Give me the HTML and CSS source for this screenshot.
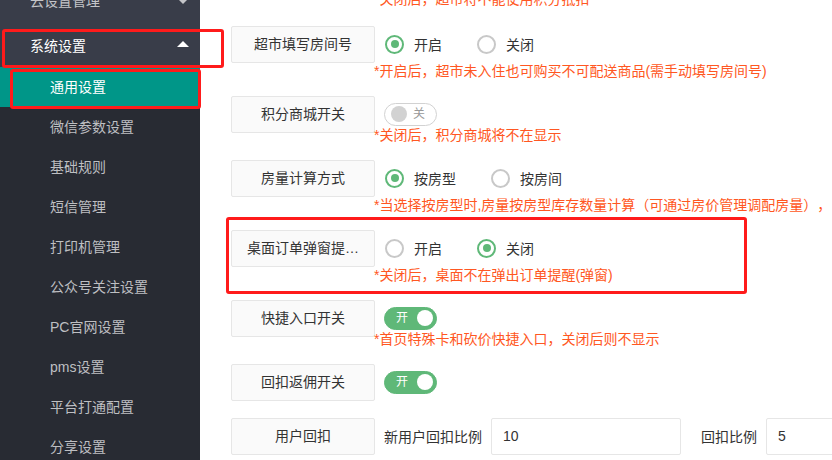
FILE: index.html
```html
<!DOCTYPE html>
<html lang="zh-CN">
<head>
<meta charset="utf-8">
<title>通用设置</title>
<link rel="stylesheet" href="styles.css">
</head>
<body>
<div class="app">
  <aside class="side">
    <div class="nav-parent dim"><span>云设置管理</span><i class="caret down"></i></div>
    <div class="nav-parent open"><span>系统设置</span><i class="caret up"></i></div>
    <ul class="nav-child">
      <li class="active">通用设置</li>
      <li>微信参数设置</li>
      <li>基础规则</li>
      <li>短信管理</li>
      <li>打印机管理</li>
      <li>公众号关注设置</li>
      <li>PC官网设置</li>
      <li>pms设置</li>
      <li>平台打通配置</li>
      <li>分享设置</li>
    </ul>
  </aside>

  <main class="main">
    <div class="hint hint-top">*关闭后，超市将不能使用积分抵扣</div>

    <div class="form-item">
      <div class="row">
        <div class="form-label">超市填写房间号</div>
        <div class="radios">
          <span class="radio checked"><i></i>开启</span>
          <span class="radio"><i></i>关闭</span>
        </div>
      </div>
      <div class="hint">*开启后，超市未入住也可购买不可配送商品(需手动填写房间号)</div>
    </div>

    <div class="form-item">
      <div class="row">
        <div class="form-label">积分商城开关</div>
        <span class="switch off"><i></i><em>关</em></span>
      </div>
      <div class="hint hint-sw">*关闭后，积分商城将不在显示</div>
    </div>

    <div class="form-item">
      <div class="row">
        <div class="form-label">房量计算方式</div>
        <div class="radios">
          <span class="radio checked"><i></i>按房型</span>
          <span class="radio"><i></i>按房间</span>
        </div>
      </div>
      <div class="hint">*当选择按房型时,房量按房型库存数量计算（可通过房价管理调配房量），</div>
    </div>

    <div class="form-item">
      <div class="row">
        <div class="form-label">桌面订单弹窗提醒开关</div>
        <div class="radios">
          <span class="radio"><i></i>开启</span>
          <span class="radio checked"><i></i>关闭</span>
        </div>
      </div>
      <div class="hint">*关闭后，桌面不在弹出订单提醒(弹窗)</div>
    </div>

    <div class="form-item">
      <div class="row">
        <div class="form-label">快捷入口开关</div>
        <span class="switch on"><em>开</em><i></i></span>
      </div>
      <div class="hint hint-sw">*首页特殊卡和砍价快捷入口，关闭后则不显示</div>
    </div>

    <div class="form-item">
      <div class="row">
        <div class="form-label">回扣返佣开关</div>
        <span class="switch on"><em>开</em><i></i></span>
      </div>
    </div>

    <div class="form-item">
      <div class="row">
        <div class="form-label">用户回扣</div>
        <span class="inline-text first">新用户回扣比例</span>
        <div class="input">10</div>
        <span class="inline-text">回扣比例</span>
        <div class="input">5</div>
      </div>
    </div>
  </main>

  <div class="mark mark-parent"></div>
  <div class="mark mark-child"></div>
  <div class="mark mark-row"></div>
</div>
</body>
</html>
```

FILE: styles.css
```css
* { box-sizing: border-box; }

html, body {
  margin: 0;
  padding: 0;
  width: 832px;
  height: 460px;
  overflow: hidden;
  background: #fff;
  font-family: "Liberation Sans", "Noto Sans CJK SC", sans-serif;
  font-size: 14px;
  color: #333;
  text-spacing-trim: space-all;
}

.app {
  position: relative;
  display: flex;
  width: 832px;
  height: 460px;
  overflow: hidden;
}

/* ---------- sidebar ---------- */
.side {
  width: 200px;
  flex: none;
  height: 460px;
  background: #282b33;
  overflow: hidden;
}

.nav-parent {
  height: 45px;
  background: #393d49;
  display: flex;
  align-items: center;
  justify-content: space-between;
  padding: 0 11px 0 30px;
  color: #fff;
}
.nav-parent.dim { margin-top: -23px; color: #c4c5c8; }

.caret {
  width: 0;
  height: 0;
  border-left: 6px solid transparent;
  border-right: 6px solid transparent;
}
.caret.up { border-bottom: 6px solid #fff; margin-top: -2px; }
.caret.down { border-top: 6px solid #c4c5c8; margin-top: 2px; }

.nav-child {
  list-style: none;
  margin: 0;
  padding: 0;
}
.nav-child li {
  height: 40px;
  line-height: 40px;
  padding-left: 50px;
  color: #bebfc2;
  white-space: nowrap;
}
.nav-child li.active {
  background: #009688;
  color: #fff;
}

/* ---------- main ---------- */
.main {
  flex: 1;
  min-width: 0;
  padding-left: 31px;
  overflow: hidden;
}

.form-item { margin-bottom: 16px; }

.row {
  display: flex;
  align-items: center;
  height: 38px;
  white-space: nowrap;
}

.form-label {
  flex: none;
  width: 144px;
  height: 37px;
  line-height: 35px;
  padding: 0 15px;
  background: #fafafa;
  border: 1px solid #e6e6e6;
  border-radius: 2px;
  text-align: center;
  color: #333;
  overflow: hidden;
  text-overflow: ellipsis;
  white-space: nowrap;
}

.hint {
  margin-left: 143px;
  height: 16px;
  line-height: 16px;
  margin-top: 0;
  color: #ff5722;
  white-space: nowrap;
}
.hint-top {
  margin-top: -9px;
  margin-bottom: 18px;
}
.hint-sw { margin-top: -6px; margin-bottom: 6px; }

/* radios */
.radios {
  display: flex;
  align-items: center;
  margin-left: 10px;
}
.radio {
  display: flex;
  align-items: center;
  margin-right: 35px;
  color: #333;
}
.radio i {
  position: relative;
  width: 19px;
  height: 19px;
  border: 2px solid #c8c8c8;
  border-radius: 50%;
  margin-right: 10px;
  background: #fff;
}
.radio.checked i { border-color: #5fb878; }
.radio.checked i::after {
  content: "";
  position: absolute;
  left: 3.5px;
  top: 3.5px;
  width: 8px;
  height: 8px;
  border-radius: 50%;
  background: #5fb878;
}

/* switch */
.switch {
  display: flex;
  align-items: center;
  width: 53px;
  height: 23px;
  margin-left: 9px;
  border: 1px solid #d2d2d2;
  border-radius: 12px;
  font-style: normal;
}
.switch em {
  font-style: normal;
  font-size: 12px;
  line-height: 12px;
}
.switch i {
  width: 16px;
  height: 16px;
  border-radius: 50%;
}
.switch.off {
  padding-left: 6px;
  background: #fff;
}
.switch.off i { background: #d2d2d2; margin-right: 6px; }
.switch.off em { color: #999; }
.switch.on {
  padding-left: 11px;
  background: #5fb878;
  border-color: #5fb878;
}
.switch.on em { color: #fff; margin-right: 9px; }
.switch.on i { background: #fff; }

/* inputs */
.inline-text {
  margin-left: 20px;
  color: #333;
}
.inline-text.first { margin-left: 9px; }
.input {
  flex: none;
  width: 190px;
  height: 37px;
  line-height: 35px;
  margin-left: 9px;
  padding-left: 11px;
  border: 1px solid #e6e6e6;
  border-radius: 2px;
  background: #fff;
  color: #333;
}

/* red annotation boxes */
.mark {
  position: absolute;
  border: 3px solid #ff1b1b;
  border-radius: 3px;
  pointer-events: none;
}
.mark-parent { left: 2px; top: 29px; width: 222px; height: 39px; }
.mark-child { left: 10px; top: 69px; width: 191px; height: 40px; }
.mark-row { left: 226px; top: 217px; width: 521px; height: 77px; }
```
